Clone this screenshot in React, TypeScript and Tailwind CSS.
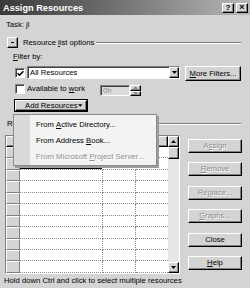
import React from "react";

const raised =
  "border border-t-white border-l-white border-r-black border-b-black shadow-[inset_-1px_-1px_#808080]";
const sunken =
  "border border-t-[#808080] border-l-[#808080] border-r-white border-b-white shadow-[inset_1px_1px_#404040]";
const disabledText = "text-[#8c8c8c] [text-shadow:1px_1px_0_#ffffff]";

function Check({ checked }: { checked?: boolean }) {
  return (
    <span className={`flex h-[10px] w-[10px] shrink-0 items-center justify-center bg-white ${sunken}`}>
      {checked && (
        <svg width="7" height="7" viewBox="0 0 7 7">
          <path d="M0.6 3.2l2 2 3.8-4" stroke="black" strokeWidth="1.6" fill="none" />
        </svg>
      )}
    </span>
  );
}

function Arrow({ up, gray }: { up?: boolean; gray?: boolean }) {
  return (
    <svg width="5" height="3" viewBox="0 0 5 3">
      <path d={up ? "M2.5 0L5 3H0z" : "M0 0h5L2.5 3z"} fill={gray ? "#8c8c8c" : "black"} />
    </svg>
  );
}

function SideButton({ label, disabled }: { label: React.ReactNode; disabled?: boolean }) {
  return (
    <div className={`flex h-[14px] w-[54px] items-center justify-center whitespace-nowrap bg-[#d4d4d4] ${raised} ${disabled ? disabledText : ""}`}>
      {label}
    </div>
  );
}

const ROWS = 11;

export default function App() {
  return (
    <div className="flex h-[288px] w-[250px] flex-col overflow-hidden bg-[#d4d4d4] font-['Liberation_Sans',Arial,sans-serif] text-[7.7px] leading-[10px] text-black">
      {/* title bar */}
      <div className="flex h-[15px] shrink-0 items-center bg-linear-to-r from-[#3a3a3a] to-[#b8b8b8] pl-[3px] pr-[2px]">
        <span className="flex-1 text-[9.2px] font-bold text-white">Assign Resources</span>
        <span className={`flex h-[10px] w-[12px] items-center justify-center bg-[#d4d4d4] text-[8px] font-bold leading-none ${raised}`}>?</span>
        <span className={`ml-[2px] flex h-[10px] w-[12px] items-center justify-center bg-[#d4d4d4] text-[9px] font-bold leading-none ${raised}`}>×</span>
      </div>

      <div className="mt-[5px] h-[10px] pl-[6px]">Task: jl</div>

      <div className="mt-[7px] flex h-[11px] items-center pl-[7px] pr-[9px]">
        <span className={`flex h-[11px] w-[11px] shrink-0 items-center justify-center bg-[#d4d4d4] ${raised}`}>
          <span className="h-px w-[3px] bg-black" />
        </span>
        <span className="ml-[5px] whitespace-nowrap">
          Resource <u>l</u>ist options
        </span>
        <span className="ml-[2px] h-[2px] flex-1 border-t border-b border-t-[#808080] border-b-white" />
      </div>

      <div className="mt-[4px] h-[10px] pl-[13px]">
        <u>F</u>ilter by:
      </div>

      <div className="mt-[4px] flex h-[15px] items-start pl-[15px]">
        <span className="mt-[2px]">
          <Check checked />
        </span>
        <div className={`ml-[2px] flex h-[13px] w-[153px] items-center bg-white ${sunken}`}>
          <span className="flex-1 pl-[2px]">All Resources</span>
          <span className={`flex h-[11px] w-[10px] items-center justify-center bg-[#d4d4d4] ${raised}`}>
            <Arrow />
          </span>
        </div>
        <div className={`ml-[5px] flex h-[15px] w-[56px] items-center justify-center whitespace-nowrap bg-[#d4d4d4] ${raised}`}>
          <span>
            <u>M</u>ore Filters...
          </span>
        </div>
      </div>

      <div className="mt-[3px] flex h-[12px] items-start pl-[15px]">
        <Check />
        <span className="ml-[2px] w-[73px] whitespace-nowrap">
          Available to <u>w</u>ork
        </span>
        <div className={`mt-[1px] flex h-[11px] w-[30px] items-center bg-[#dcdcdc] pl-[2px] ${sunken} text-[#8c8c8c]`}>0h</div>
        <div className="mt-[1px] flex h-[11px] w-[11px] flex-col">
          <span className={`flex h-[5.5px] items-center justify-center bg-[#d4d4d4] ${raised}`}>
            <Arrow up gray />
          </span>
          <span className={`flex h-[5.5px] items-center justify-center bg-[#d4d4d4] ${raised}`}>
            <Arrow gray />
          </span>
        </div>
      </div>

      <div className="mt-[3px] pl-[14px]">
        <div className="relative w-[74px]">
          <div className="h-[13px] w-[74px] border border-black">
            <div className={`flex h-full items-center whitespace-nowrap bg-[#d4d4d4] pl-[9px] pr-[4px] ${raised}`}>
              <span className="flex-1">Add Resources</span>
              <Arrow />
            </div>
          </div>
          {/* dropdown menu */}
          <div className="absolute left-[-1px] top-[15px] z-10 flex h-[52px] w-[144px] border border-[#8a8a8a] bg-[#f3f3f3] shadow-[2px_2px_0_#9c9c9c]">
            <div className="w-[16px] bg-[#dadada]" />
            <div className="flex flex-1 flex-col pt-[2px]">
              <div className="flex h-[16px] items-center whitespace-nowrap pl-[6px]">
                From&nbsp;<u>A</u>ctive Directory...
              </div>
              <div className="flex h-[16px] items-center whitespace-nowrap pl-[6px]">
                From Address&nbsp;<u>B</u>ook...
              </div>
              <div className={`flex h-[16px] items-center whitespace-nowrap pl-[6px] ${disabledText}`}>
                From Microsoft&nbsp;<u>P</u>roject Server...
              </div>
            </div>
          </div>
        </div>
      </div>

      <div className="mt-[7px] flex h-[10px] items-center pl-[7px] pr-[9px]">
        <span className="whitespace-nowrap">Resources from jl</span>
        <span className="ml-[2px] h-[2px] flex-1 border-t border-b border-t-[#808080] border-b-white" />
      </div>

      <div className="mt-[6px] flex">
        {/* grid */}
        <div className={`ml-[5px] flex h-[139px] w-[175px] bg-white ${sunken}`}>
          <div className="flex flex-1 flex-col">
            <div className="flex h-[11px]">
              <div className={`w-[14px] bg-[#d4d4d4] ${raised}`} />
              <div className={`w-[83px] bg-[#d4d4d4] ${raised}`} />
              <div className={`w-[33px] bg-[#d4d4d4] ${raised}`} />
              <div className={`flex-1 bg-[#d4d4d4] ${raised}`} />
            </div>
            {Array.from({ length: ROWS }).map((_, i) => (
              <div key={i} className="flex h-[11.45px]">
                <div className="w-[14px] border border-t-white border-l-white border-r-[#808080] border-b-[#808080] bg-[#d4d4d4]" />
                <div
                  className={`w-[83px] border-r border-b border-dotted border-[#8a8a8a] ${i === 1 ? "shadow-[inset_0_0_0_2px_black]" : ""}`}
                />
                <div className="w-[33px] border-r border-b border-dotted border-[#8a8a8a]" />
                <div className="flex-1 border-b border-dotted border-[#8a8a8a]" />
              </div>
            ))}
          </div>
          {/* scrollbar */}
          <div className="flex w-[11px] flex-col bg-[#e6e6e6]">
            <span className={`flex h-[11px] items-center justify-center bg-[#d4d4d4] ${raised}`}>
              <Arrow up />
            </span>
            <span className={`h-[12px] bg-[#d4d4d4] ${raised}`} />
            <span className="flex-1" />
            <span className={`flex h-[11px] items-center justify-center bg-[#d4d4d4] ${raised}`}>
              <Arrow />
            </span>
          </div>
        </div>

        {/* side buttons */}
        <div className="ml-[8px] flex flex-col gap-[9.4px] pt-[4px]">
          <SideButton disabled label={<span>A<u>s</u>sign</span>} />
          <SideButton disabled label={<span><u>R</u>emove</span>} />
          <SideButton disabled label={<span>Re<u>p</u>lace...</span>} />
          <SideButton disabled label={<span><u>G</u>raphs...</span>} />
          <SideButton label="Close" />
          <SideButton label={<span><u>H</u>elp</span>} />
        </div>
      </div>

      <div className="mt-[2px] h-[10px] whitespace-nowrap pl-[4px]">Hold down Ctrl and click to select multiple resources</div>
    </div>
  );
}
